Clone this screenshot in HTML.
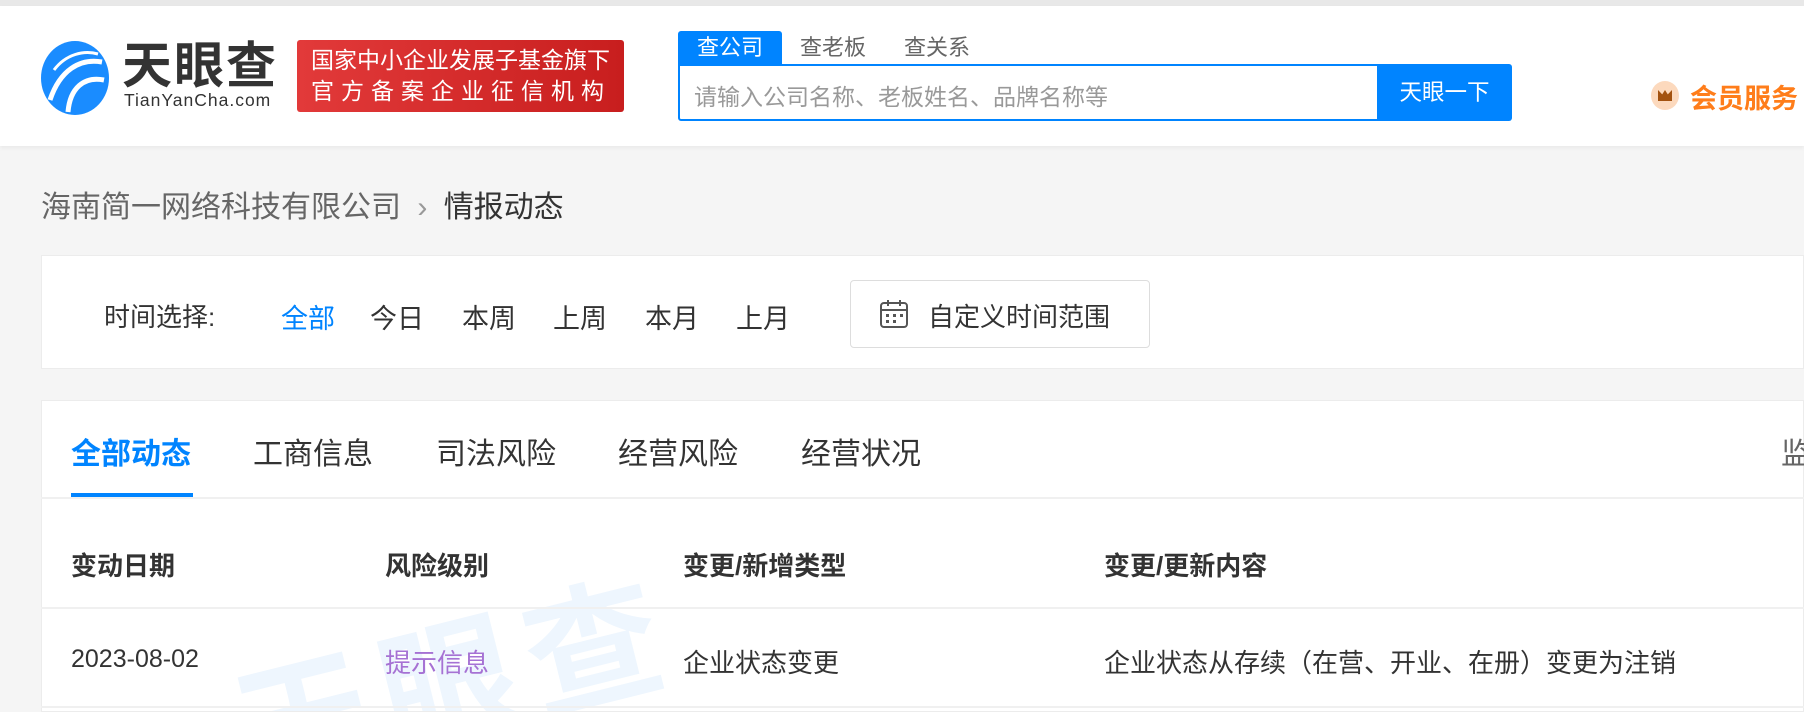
<!DOCTYPE html><html><head><meta charset="utf-8"><style>
*{margin:0;padding:0;box-sizing:border-box}
html{width:1804px;height:712px;overflow:hidden}
body{width:1804px;height:712px;overflow:hidden;background:#f5f5f5;font-family:"Liberation Sans","Noto Sans CJK SC",sans-serif;color:#333;position:relative}
.a{position:absolute;white-space:nowrap}
</style></head><body>
<div class="a" style="left:0;top:0;width:1804px;height:6px;background:#e8e8e8"></div>
<div class="a" style="left:0;top:6px;width:1804px;height:140px;background:#fff;box-shadow:0 2px 4px rgba(0,0,0,.05)"></div>
<svg class="a" style="left:40px;top:40px" width="70" height="76" viewBox="0 0 70 76">
<ellipse cx="35" cy="38" rx="34" ry="37" fill="#1a8cff"/>
<path d="M10 60 C20 30 40 18 62 22" stroke="#fff" stroke-width="5" fill="none"/>
<path d="M28 72 C30 48 44 36 64 40" stroke="#fff" stroke-width="5" fill="none"/>
<path d="M14 30 C26 14 44 10 58 14" stroke="#fff" stroke-width="3" fill="none"/>
</svg>
<div class="a" style="left:122px;top:38px;font-size:50px;font-weight:bold;color:#333;letter-spacing:2px;line-height:56px">天眼查</div>
<div class="a" style="left:124px;top:90px;font-size:17.5px;color:#333;letter-spacing:1px">TianYanCha.com</div>
<div class="a" style="left:297px;top:40px;width:327px;height:72px;background:linear-gradient(90deg,#e23a3a,#c81e1e);border-radius:3px;color:#fff;font-size:23px;line-height:31px;padding:5px 0 0 14px">国家中小企业发展子基金旗下<br><span style="letter-spacing:7px">官方备案企业征信机构</span></div>
<div class="a" style="left:678px;top:31px;width:104px;height:34px;background:#0084ff;border-radius:3px 3px 0 0;color:#fff;font-size:22px;text-align:center;line-height:34px">查公司</div>
<div class="a" style="left:800px;top:33px;font-size:22px;color:#666;line-height:30px">查老板</div>
<div class="a" style="left:904px;top:33px;font-size:22px;color:#666;line-height:30px">查关系</div>
<div class="a" style="left:678px;top:64px;width:710px;height:57px;border:2px solid #0084ff;border-radius:0 0 0 3px;background:#fff"></div>
<div class="a" style="left:694px;top:78px;font-size:23px;color:#999">请输入公司名称、老板姓名、品牌名称等</div>
<div class="a" style="left:1377px;top:64px;width:135px;height:57px;background:#0084ff;border-radius:0 3px 3px 0;color:#fff;font-size:22.5px;text-align:center;line-height:57px">天眼一下</div>
<div class="a" style="left:1651px;top:81px;width:28px;height:29px;border-radius:50%;background:#fcd9bd"></div>
<div class="a" style="left:1658px;top:90px;width:14px;height:11px;background:#a3520f;clip-path:polygon(0 0,30% 40%,50% 0,70% 40%,100% 0,100% 100%,0 100%)"></div>
<div class="a" style="left:1690px;top:77px;font-size:27px;font-weight:bold;color:#ff7d1a">会员服务</div>
<div class="a" style="left:41px;top:182px;font-size:30px;color:#666">海南简一网络科技有限公司 <span style="color:#999;margin:0 8px">›</span> <span style="color:#333">情报动态</span></div>
<div class="a" style="left:41px;top:255px;width:1763px;height:114px;background:#fff;border:1px solid #ececec"></div>
<div class="a" style="left:104px;top:297px;font-size:26px;color:#333">时间选择:</div>
<div class="a" style="left:281px;top:297px;font-size:27px;color:#0084ff">全部</div>
<div class="a" style="left:370px;top:297px;font-size:27px">今日</div>
<div class="a" style="left:462px;top:297px;font-size:27px">本周</div>
<div class="a" style="left:553px;top:297px;font-size:27px">上周</div>
<div class="a" style="left:645px;top:297px;font-size:27px">本月</div>
<div class="a" style="left:736px;top:297px;font-size:27px">上月</div>
<div class="a" style="left:850px;top:280px;width:300px;height:68px;border:1px solid #ddd;border-radius:4px"></div>
<svg class="a" style="left:878px;top:298px" width="32" height="32" viewBox="0 0 32 32"><rect x="3" y="5" width="26" height="24" rx="3" fill="none" stroke="#555" stroke-width="2"/><path d="M3 12H29M10 2V8M22 2V8" stroke="#555" stroke-width="2"/><g fill="#555"><rect x="8" y="16" width="3" height="3"/><rect x="15" y="16" width="3" height="3"/><rect x="22" y="16" width="3" height="3"/><rect x="8" y="22" width="3" height="3"/><rect x="15" y="22" width="3" height="3"/></g></svg>
<div class="a" style="left:928px;top:297px;font-size:26px">自定义时间范围</div>
<div class="a" style="left:41px;top:400px;width:1763px;height:312px;background:#fff;border:1px solid #ececec;overflow:hidden">
<div class="a" style="left:170px;top:230px;font-size:135px;font-weight:bold;color:#eef6fe;transform:rotate(-14deg);transform-origin:left top;letter-spacing:14px">天眼查</div>
</div>
<div class="a" style="left:71px;top:429px;font-size:30px;font-weight:bold;color:#0084ff">全部动态</div>
<div class="a" style="left:71px;top:493px;width:122px;height:4px;background:#0084ff"></div>
<div class="a" style="left:253px;top:429px;font-size:30px">工商信息</div>
<div class="a" style="left:436px;top:429px;font-size:30px">司法风险</div>
<div class="a" style="left:618px;top:429px;font-size:30px">经营风险</div>
<div class="a" style="left:801px;top:429px;font-size:30px">经营状况</div>
<div class="a" style="left:1781px;top:429px;font-size:30px;color:#666">监</div>
<div class="a" style="left:41px;top:497px;width:1763px;height:2px;background:#f0f0f0"></div>
<div class="a" style="left:71px;top:546px;font-size:26px;font-weight:bold">变动日期</div>
<div class="a" style="left:385px;top:546px;font-size:26px;font-weight:bold">风险级别</div>
<div class="a" style="left:683px;top:546px;font-size:26px;font-weight:bold">变更/新增类型</div>
<div class="a" style="left:1104px;top:546px;font-size:26px;font-weight:bold">变更/更新内容</div>
<div class="a" style="left:41px;top:607px;width:1763px;height:2px;background:#f0f0f0"></div>
<div class="a" style="left:71px;top:645px;font-size:25px">2023-08-02</div>
<div class="a" style="left:385px;top:643px;font-size:26px;color:#a672d4">提示信息</div>
<div class="a" style="left:683px;top:643px;font-size:26px">企业状态变更</div>
<div class="a" style="left:1104px;top:643px;font-size:26px">企业状态从存续（在营、开业、在册）变更为注销</div>
<div class="a" style="left:41px;top:706px;width:1763px;height:2px;background:#f0f0f0"></div>
</body></html>
